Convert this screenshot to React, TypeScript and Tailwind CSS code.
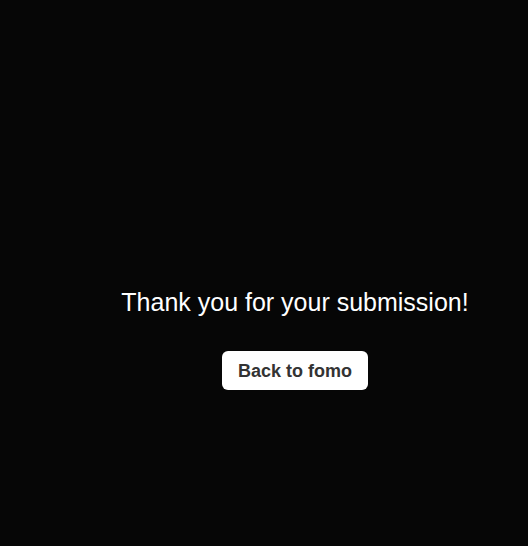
import React from 'react';

export default function App() {
  return (
    <div
      className="min-h-[546px] w-full bg-[#060606] pl-[62px] pt-[284px]"
      style={{ fontFamily: '"Liberation Sans", Arial, sans-serif' }}
    >
      <div className="flex flex-col items-center">
        <h1 className="text-[25px] leading-[36px] text-white">Thank you for your submission!</h1>
        <button
          type="button"
          className="mt-[31px] h-[39px] rounded-md bg-white px-4 pt-px text-[18px] font-bold text-[#333333]"
        >
          Back to fomo
        </button>
      </div>
    </div>
  );
}
